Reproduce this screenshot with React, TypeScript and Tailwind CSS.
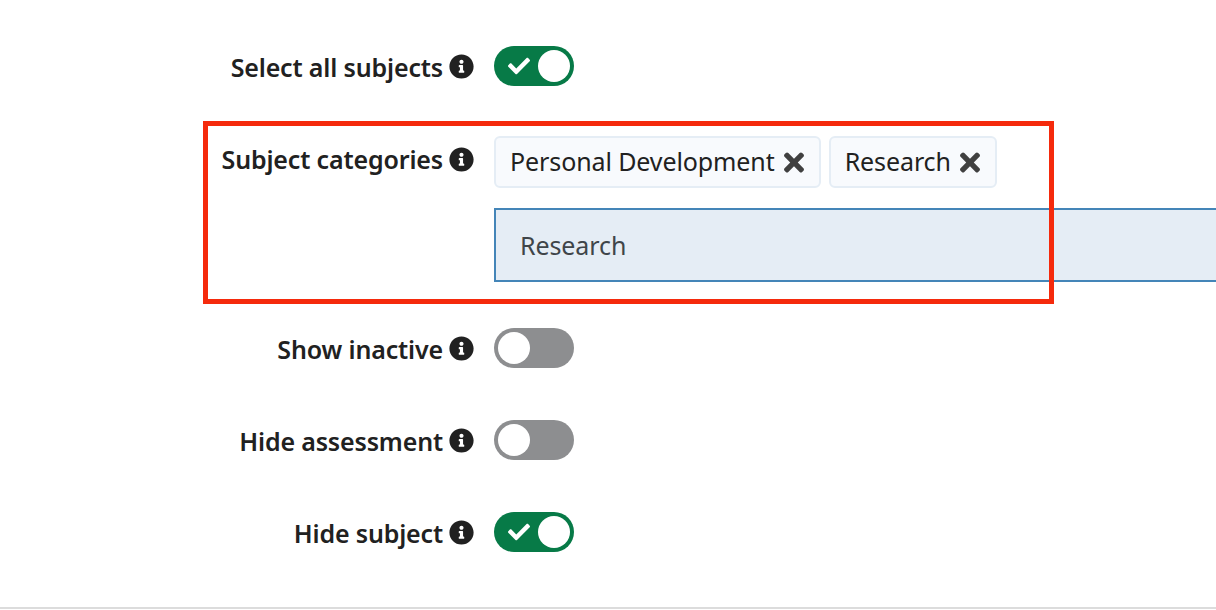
import React from 'react';
import { FaCheck, FaInfoCircle, FaTimes } from 'react-icons/fa';

const Label = ({ text, className = '', textClass = 'mt-[1px]' }: { text: string; className?: string; textClass?: string }) => (
  <div className={`w-[474px] shrink-0 flex items-center justify-end gap-[6px] text-[#212121] ${className}`}>
    <span className={`font-semibold text-[25px] leading-[32px] tracking-[-0.15px] ${textClass}`}>{text}</span>
    <FaInfoCircle className="w-[25px] h-[25px] text-[#212121]" />
  </div>
);

const Toggle = ({ on }: { on: boolean }) => (
  <div
    className={`w-[80px] h-[40px] rounded-full flex items-center px-[4px] ${
      on ? 'bg-[#077a47] justify-between' : 'bg-[#8d8e90]'
    }`}
  >
    {on && <FaCheck className="w-[22px] h-[22px] ml-[10px] text-white" />}
    <div className={`w-[32px] h-[32px] rounded-full bg-white ${on ? 'ml-auto' : ''}`} />
  </div>
);

const Chip = ({ text }: { text: string }) => (
  <div className="h-[52px] pl-[14px] pr-[15px] flex items-center gap-[9px] rounded-[6px] border-2 border-[#e5edf5] bg-[#f8fafd] text-[#212121]">
    <span className="text-[25px] leading-[32px] tracking-[-0.1px] -mt-[2px]">{text}</span>
    <FaTimes className="w-[20px] h-[29px] text-[#404040]" />
  </div>
);

const ToggleRow = ({ text, on, className = '' }: { text: string; on: boolean; className?: string }) => (
  <div className={`flex items-center gap-[20px] ${className}`}>
    <Label text={text} />
    <Toggle on={on} />
  </div>
);

export default function App() {
  return (
    <div className="relative w-[1216px] h-[610px] bg-white overflow-hidden flex flex-col font-['Noto_Sans',sans-serif]">
      <ToggleRow text="Select all subjects" on className="mt-[46px]" />

      <div className="flex items-start gap-[20px] mt-[50px]">
        <Label text="Subject categories" className="h-[46px]" textClass="mt-0" />
        <div className="flex-1 -mr-[2px]">
          <div className="flex gap-[8px]">
            <Chip text="Personal Development" />
            <Chip text="Research" />
          </div>
          <div className="mt-[20px] h-[74px] pl-[24px] pt-[2px] flex items-center border-2 border-[#4485b8] bg-[#e5edf5] text-[25px] tracking-[-0.1px] text-[#3f4549]">
            Research
          </div>
        </div>
      </div>

      <ToggleRow text="Show inactive" on={false} className="mt-[46px]" />
      <ToggleRow text="Hide assessment" on={false} className="mt-[52px]" />
      <ToggleRow text="Hide subject" on className="mt-[52px]" />

      <div className="mt-auto mb-[1px] h-[2px] bg-[#dcdcdc]" />

      {/* red annotation box */}
      <div className="absolute left-[203px] top-[121px] w-[851px] h-[183px] border-[5px] border-[#f52a0c]" />
    </div>
  );
}
